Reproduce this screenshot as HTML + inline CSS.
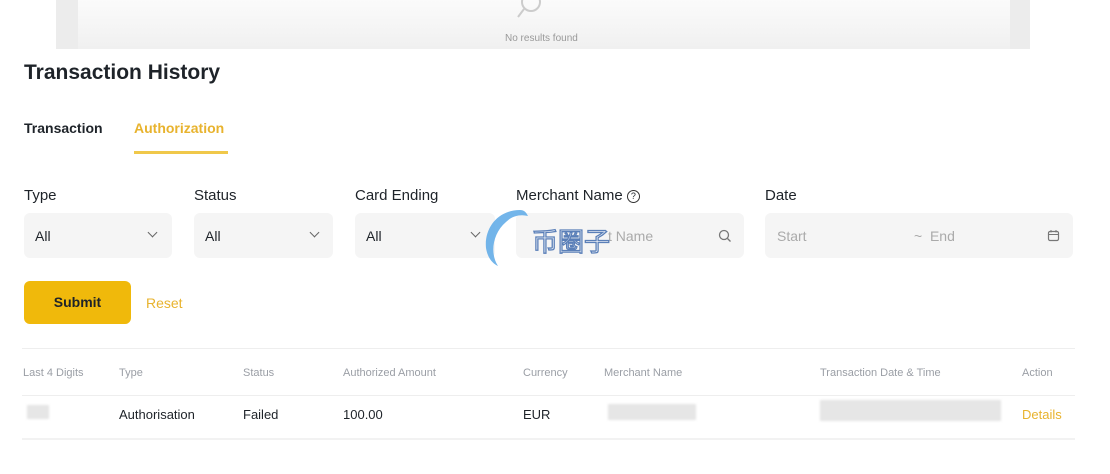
<!DOCTYPE html><html><head><meta charset="utf-8"><style>
body{margin:0;width:1110px;height:474px;background:#fff;font-family:"Liberation Sans","Noto Sans CJK SC",sans-serif;color:#1e2329;position:relative;overflow:hidden}
.a{position:absolute;white-space:nowrap}
.box{position:absolute;top:213px;height:45px;background:#f5f5f5;border-radius:6px}
.lbl{top:187px;font-size:15px;color:#1e2329}
.val{font-size:14px;top:228px}
.th{top:367px;font-size:11px;color:#9a9ea5}
.td{top:407px;font-size:13px;color:#1e2329}
.chev{position:absolute;top:229px;width:6px;height:6px;border-right:1.3px solid #666;border-bottom:1.3px solid #666;transform:rotate(45deg)}
.blur{position:absolute;background:#e6e6e6;filter:blur(1px)}
</style></head><body>
<div class="a" style="left:56px;top:0;width:974px;height:49px;background:#ececec"></div>
<div class="a" style="left:78px;top:0;width:932px;height:49px;background:linear-gradient(#fbfbfb,#f0f0f0)"></div>
<svg class="a" style="left:505px;top:0" width="60" height="22"><circle cx="26" cy="2" r="9" fill="none" stroke="#ccc" stroke-width="2"/><line x1="19" y1="9" x2="13" y2="17" stroke="#ccc" stroke-width="2"/></svg>
<div class="a" style="left:505px;top:33px;font-size:10px;color:#999">No results found</div>
<div class="a" style="left:24px;top:61px;font-size:21px;font-weight:bold">Transaction History</div>
<div class="a" style="left:24px;top:120px;font-size:14px;font-weight:bold">Transaction</div>
<div class="a" style="left:134px;top:120px;font-size:14px;font-weight:bold;color:#e8b32e">Authorization</div>
<div class="a" style="left:134px;top:151px;width:94px;height:3px;background:#f0c84a"></div>
<div class="a lbl" style="left:24px">Type</div>
<div class="a lbl" style="left:194px">Status</div>
<div class="a lbl" style="left:355px">Card Ending</div>
<div class="a lbl" style="left:516px">Merchant Name <span style="display:inline-block;width:11px;height:11px;border:1.3px solid #333;border-radius:50%;font-size:9px;text-align:center;line-height:11px;vertical-align:1px">?</span></div>
<div class="a lbl" style="left:765px">Date</div>
<div class="box" style="left:24px;width:148px"></div><div class="a val" style="left:35px">All</div><div class="chev" style="left:149px"></div>
<div class="box" style="left:194px;width:139px"></div><div class="a val" style="left:205px">All</div><div class="chev" style="left:311px"></div>
<div class="box" style="left:355px;width:140px"></div><div class="a val" style="left:366px">All</div><div class="chev" style="left:472px"></div>
<div class="box" style="left:516px;width:228px"></div><div class="a val" style="left:608px;color:#aaa">t Name</div>
<svg class="a" style="left:718px;top:229px" width="14" height="14"><circle cx="6" cy="6" r="4.5" fill="none" stroke="#777" stroke-width="1.3"/><line x1="9.5" y1="9.5" x2="12.5" y2="12.5" stroke="#777" stroke-width="1.3"/></svg>
<div class="box" style="left:765px;width:308px"></div><div class="a val" style="left:777px;color:#aaa">Start</div><div class="a val" style="left:914px;color:#aaa">~ &nbsp;End</div>
<svg class="a" style="left:1047px;top:229px" width="14" height="14"><rect x="1.5" y="2.5" width="10" height="9" rx="1.5" fill="none" stroke="#777" stroke-width="1.2"/><line x1="1.5" y1="5.5" x2="11.5" y2="5.5" stroke="#777"/><line x1="4" y1="1" x2="4" y2="3.5" stroke="#777"/><line x1="9" y1="1" x2="9" y2="3.5" stroke="#777"/></svg>
<svg class="a" style="left:480px;top:206px" width="60" height="62"><path d="M40 4 C18 4 4 22 6 42 C8 54 14 58 18 60 C10 48 12 28 26 16 C32 10 40 8 48 10 C46 6 44 4 40 4Z" fill="#5aa8e6" opacity=".85"/></svg>
<div class="a" style="left:532px;top:222px;font-size:26px;color:#fff;-webkit-text-stroke:1.3px #5a7fb8">币圈子</div>
<div class="a" style="left:24px;top:281px;width:107px;height:43px;background:#f0b90b;border-radius:6px;font-size:14px;font-weight:bold;text-align:center;line-height:43px">Submit</div>
<div class="a" style="left:146px;top:295px;font-size:14px;color:#e8b32e">Reset</div>
<div class="a" style="left:22px;top:348px;width:1053px;height:1px;background:#eee"></div>
<div class="a th" style="left:23px">Last 4 Digits</div>
<div class="a th" style="left:119px">Type</div>
<div class="a th" style="left:243px">Status</div>
<div class="a th" style="left:343px">Authorized Amount</div>
<div class="a th" style="left:523px">Currency</div>
<div class="a th" style="left:604px">Merchant Name</div>
<div class="a th" style="left:820px">Transaction Date &amp; Time</div>
<div class="a th" style="left:1022px">Action</div>
<div class="a" style="left:22px;top:395px;width:1053px;height:1px;background:#eee"></div>
<div class="blur" style="left:27px;top:405px;width:22px;height:14px"></div>
<div class="a td" style="left:119px">Authorisation</div>
<div class="a td" style="left:243px">Failed</div>
<div class="a td" style="left:343px">100.00</div>
<div class="a td" style="left:523px">EUR</div>
<div class="blur" style="left:608px;top:404px;width:88px;height:16px"></div>
<div class="blur" style="left:820px;top:400px;width:181px;height:21px"></div>
<div class="a td" style="left:1022px;color:#e8b32e">Details</div>
<div class="a" style="left:22px;top:438px;width:1053px;height:2px;background:#f2f2f2"></div>
</body></html>
